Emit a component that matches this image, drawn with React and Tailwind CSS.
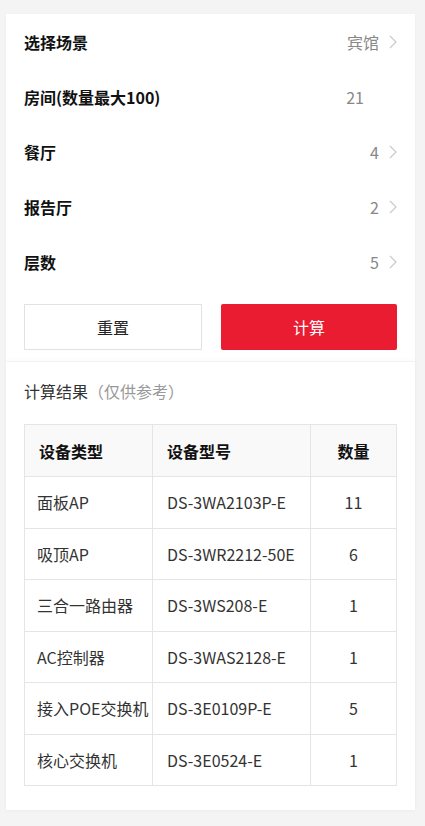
import React from 'react';

const fields = [
  { label: '选择场景', value: '宾馆', arrow: true },
  { label: '房间(数量最大100)', value: '21', arrow: false },
  { label: '餐厅', value: '4', arrow: true },
  { label: '报告厅', value: '2', arrow: true },
  { label: '层数', value: '5', arrow: true },
];

const results = [
  ['面板AP', 'DS-3WA2103P-E', '11'],
  ['吸顶AP', 'DS-3WR2212-50E', '6'],
  ['三合一路由器', 'DS-3WS208-E', '1'],
  ['AC控制器', 'DS-3WAS2128-E', '1'],
  ['接入POE交换机', 'DS-3E0109P-E', '5'],
  ['核心交换机', 'DS-3E0524-E', '1'],
];

const Chevron = () => (
  <svg width="8" height="14" viewBox="0 0 8 14" fill="none" className="ml-[10px]">
    <path d="M1 1l6 6-6 6" stroke="#cccccc" strokeWidth="1.3" />
  </svg>
);

const App = () => {
  return (
    <div
      className="min-h-[826px] w-[425px] bg-[#f4f4f4] pl-[6px] pr-[10px] pt-[14px] pb-4"
      style={{ fontFamily: '"Microsoft YaHei", "Noto Sans CJK SC", sans-serif' }}
    >
      <div className="bg-white shadow-[0_1px_3px_rgba(0,0,0,0.04)]">
        {/* form */}
        <div className="px-[18px] pb-[11px]">
          {fields.map((f) => (
            <div key={f.label} className="flex h-[55px] items-center justify-between">
              <span className="text-[16px] font-bold text-[#111]">{f.label}</span>
              <div className="flex items-center">
                <span className={`text-[16px] text-[#888] ${f.arrow ? '' : 'mr-[33px]'}`}>{f.value}</span>
                {f.arrow && <Chevron />}
              </div>
            </div>
          ))}
          <div className="mt-[15px] flex gap-[19px]">
            <button className="h-[46px] flex-1 border border-[#e2e2e2] bg-white text-[16px] text-[#222]">
              重置
            </button>
            <button className="h-[46px] flex-1 rounded-[2px] bg-[#e91c31] text-[16px] text-white">
              计算
            </button>
          </div>
        </div>

        {/* results */}
        <div className="border-t border-[#f3f3f3] px-[18px] pt-[17px] pb-[24px] shadow-[0_-2px_4px_rgba(0,0,0,0.02)]">
          <div className="text-[16px] text-[#333]">
            计算结果<span className="text-[#999]">（仅供参考）</span>
          </div>
          <table className="mt-[21px] w-full border-collapse text-[16px]">
            <thead>
              <tr className="h-[52px] bg-[#f9f9f9]">
                <th className="w-[128px] border border-[#e5e5e5] pl-[14px] text-left font-bold text-[#111]">设备类型</th>
                <th className="w-[158px] border border-[#e5e5e5] pl-[14px] text-left font-bold text-[#111]">设备型号</th>
                <th className="border border-[#e5e5e5] text-center font-bold text-[#111]">数量</th>
              </tr>
            </thead>
            <tbody>
              {results.map((r) => (
                <tr key={r[0]} className="h-[51.5px]">
                  <td className="border border-[#e5e5e5] pl-[12px] text-[#333] whitespace-nowrap">{r[0]}</td>
                  <td className="border border-[#e5e5e5] pl-[14px] text-[#333] whitespace-nowrap">{r[1]}</td>
                  <td className="border border-[#e5e5e5] text-center text-[#333]">{r[2]}</td>
                </tr>
              ))}
            </tbody>
          </table>
        </div>
      </div>
    </div>
  );
};

export default App;
